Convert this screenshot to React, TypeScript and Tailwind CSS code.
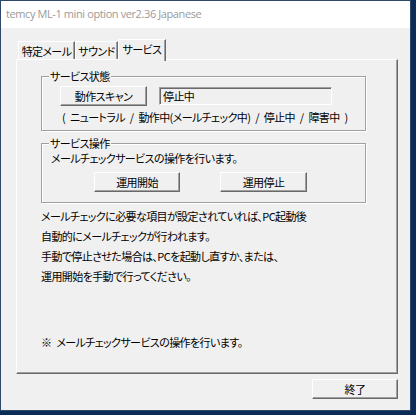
import React from "react";

const jp = "font-['Noto_Sans_CJK_JP',sans-serif] [font-feature-settings:'palt'] text-[11px] tracking-[-0.6px] leading-[14px] text-black whitespace-nowrap";

const Button = ({ label, className = "" }: { label: string; className?: string }) => (
  <div
    className={`flex items-center justify-center h-[20px] bg-[#f0f0f0] border border-t-white border-l-white border-b-[#696969] border-r-[#696969] shadow-[inset_-1px_-1px_0_#a0a0a0] ${jp} ${className}`}
  >
    {label}
  </div>
);

const GroupBox = ({
  title,
  className = "",
  children,
}: {
  title: string;
  className?: string;
  children: React.ReactNode;
}) => (
  <div
    className={`relative border border-[#a0a0a0] shadow-[1px_1px_0_#fff,inset_1px_1px_0_#fff] ${className}`}
  >
    <span className={`absolute left-[7px] -top-[8px] px-[1px] bg-[#f0f0f0] ${jp}`}>{title}</span>
    {children}
  </div>
);

const App = () => {
  return (
    <div className="w-[416px] h-[415px] bg-[#0b2c57] overflow-hidden">
      <div className="w-[411px] h-[411px] border border-[#2d4869] bg-[#f0f0f0] flex flex-col">
        {/* title bar */}
        <div className="h-[27px] bg-white flex items-center pl-[5px] font-['Open_Sans',sans-serif] text-[11px] tracking-[-0.4px] text-[#9a9a9a]">
          temcy ML-1 mini option ver2.36 Japanese
        </div>

        {/* tabs */}
        <div className="mt-[11px] ml-[17px] h-[20px] flex items-end">
          <div className={`w-[57px] h-[18px] flex items-center justify-center border-t border-l border-white border-r border-r-[#696969] shadow-[inset_-1px_0_0_#a0a0a0] ${jp}`}>
            特定メール
          </div>
          <div className={`w-[43px] h-[18px] flex items-center justify-center border-t border-l border-white border-r border-r-[#696969] shadow-[inset_-1px_0_0_#a0a0a0] ${jp}`}>
            サウンド
          </div>
          <div className={`relative z-10 w-[48px] h-[22px] -mb-[2px] pb-[3px] bg-[#f0f0f0] flex items-center justify-center border-t border-l border-white border-r border-r-[#696969] shadow-[inset_-1px_0_0_#a0a0a0] ${jp}`}>
            サービス
          </div>
        </div>

        {/* tab panel */}
        <div className="ml-[15px] w-[382px] h-[315px] border border-t-white border-l-white border-b-[#696969] border-r-[#696969] shadow-[inset_-1px_-1px_0_#a0a0a0] flex flex-col pl-[24px]">
          <GroupBox title="サービス状態" className="mt-[16px] w-[325px] h-[55px]">
            <div className="flex items-center mt-[9px] ml-[18px]">
              <Button label="動作スキャン" className="w-[87px]" />
              <div className={`ml-[12px] w-[173px] h-[18px] flex items-center pl-[3px] bg-[#f0f0f0] border border-t-[#a0a0a0] border-l-[#a0a0a0] border-b-white border-r-white shadow-[inset_1px_1px_0_#696969] ${jp}`}>
                停止中
              </div>
            </div>
            <div className={`mt-[4px] ml-[20px] ${jp} [word-spacing:3px]`}>
              ( ニュートラル / 動作中(メールチェック中) / 停止中 / 障害中 )
            </div>
          </GroupBox>

          <GroupBox title="サービス操作" className="mt-[12px] w-[325px] h-[60px]">
            <div className={`mt-[7px] ml-[9px] ${jp}`}>メールチェックサービスの操作を行います。</div>
            <div className="flex mt-[7px] ml-[52px]">
              <Button label="運用開始" className="w-[86px]" />
              <Button label="運用停止" className="w-[87px] ml-[40px]" />
            </div>
          </GroupBox>

          <div className={`mt-[3px] ${jp} leading-[20px]`}>
            <p>メールチェックに必要な項目が設定されていれば、PC起動後</p>
            <p>自動的にメールチェックが行われます。</p>
            <p>手動で停止させた場合は、PCを起動し直すか、または、</p>
            <p>運用開始を手動で行ってください。</p>
          </div>

          <div className={`mt-[46px] ${jp} leading-[20px] [word-spacing:3px]`}>※ メールチェックサービスの操作を行います。</div>
        </div>

        <div className="mt-[5px] ml-[311px]">
          <Button label="終了" className="w-[86px]" />
        </div>
      </div>
    </div>
  );
};

export default App;
